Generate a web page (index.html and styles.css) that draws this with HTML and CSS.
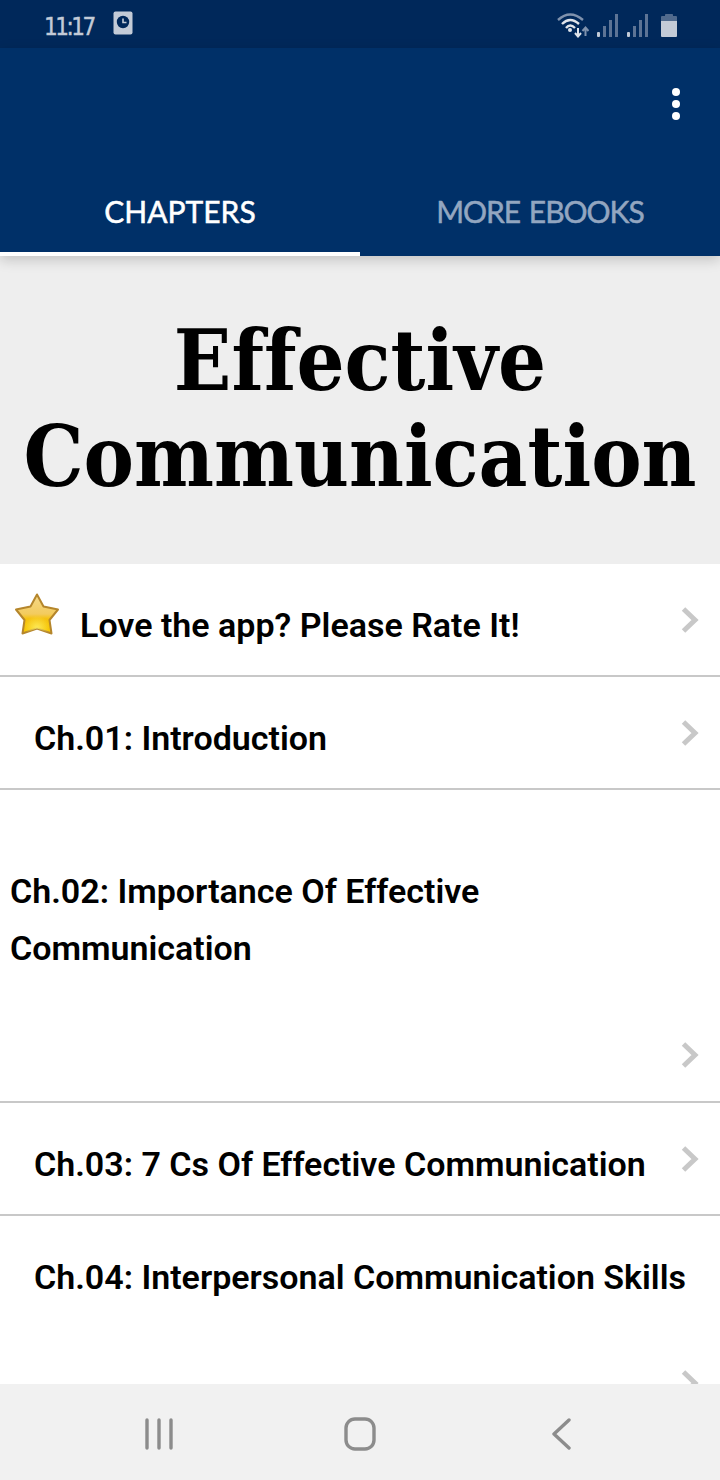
FILE: index.html
```html
<!DOCTYPE html>
<html lang="en">
<head>
  <meta charset="UTF-8">
  <title>Effective Communication</title>
  <link rel="stylesheet" href="styles.css">
</head>
<body>
  <div class="phone">

    <!-- Status bar -->
    <div class="status-bar">
      <div class="status-left">
        <span class="clock">11:17</span>
        <svg class="clock-badge" width="20" height="24" viewBox="0 0 20 24">
          <rect x="0.5" y="0.5" width="19" height="23" rx="2" fill="#c3cbd7"/>
          <circle cx="10" cy="11" r="6.2" fill="#00285a"/>
          <path d="M10 7.5V11.5H13.5" fill="none" stroke="#c3cbd7" stroke-width="1.6"/>
        </svg>
      </div>
      <div class="status-right">
        <svg width="32" height="26" viewBox="0 0 32 26">
          <path d="M1 8Q13 -3 26 8" fill="none" stroke="#7f92ad" stroke-width="2.4"/>
          <path d="M5 12Q13 4 22 12" fill="none" stroke="#dfe4ea" stroke-width="2.4"/>
          <path d="M9 16Q13 11 18 16" fill="none" stroke="#dfe4ea" stroke-width="2.4"/>
          <circle cx="13" cy="18" r="2" fill="#dfe4ea"/>
          <path d="M21 16V24M18 21L21 24.5L24 21" fill="none" stroke="#dfe4ea" stroke-width="2"/>
          <path d="M28.500 24V16M25.500 19L28.500 15.500L31.500 19" fill="none" stroke="#7f92ad" stroke-width="2"/>
        </svg>
        <svg class="signal" width="22" height="24" viewBox="0 0 22 24">
          <rect x="0" y="19" width="3" height="5" rx="1" fill="#c3cbd7"/>
          <rect x="6" y="13" width="3" height="11" fill="#5d7495"/>
          <rect x="12" y="7" width="3" height="17" fill="#5d7495"/>
          <rect x="18" y="1" width="3" height="23" fill="#5d7495"/>
        </svg>
        <svg class="signal" width="22" height="24" viewBox="0 0 22 24">
          <rect x="0" y="19" width="3" height="5" rx="1" fill="#c3cbd7"/>
          <rect x="6" y="13" width="3" height="11" fill="#5d7495"/>
          <rect x="12" y="7" width="3" height="17" fill="#5d7495"/>
          <rect x="18" y="1" width="3" height="23" fill="#5d7495"/>
        </svg>
        <svg class="battery" width="16" height="24" viewBox="0 0 16 24">
          <path d="M4 3V1.500Q4 1 5 1H11Q12 1 12 1.500V3H15Q16 3 16 4V8H0V4Q0 3 1 3Z" fill="#506a8d"/>
          <path d="M0 8H16V23Q16 24 15 24H1Q0 24 0 23Z" fill="#c3cbd7"/>
        </svg>
      </div>
    </div>

    <!-- App bar with tabs -->
    <div class="app-bar">
      <div class="toolbar">
        <div class="overflow-menu"><i></i><i></i><i></i></div>
      </div>
      <div class="tabs">
        <div class="tab active">CHAPTERS</div>
        <div class="tab more">MORE EBOOKS</div>
      </div>
    </div>

    <!-- Book title -->
    <div class="book-title">
      <h1>Effective Communication</h1>
    </div>

    <!-- Chapter list -->
    <div class="chapters">
      <div class="row rate">
        <svg class="star" width="46" height="46" viewBox="0 0 46 46">
          <defs>
            <linearGradient id="starFill" x1="0" y1="0" x2="0" y2="1">
              <stop offset="0" stop-color="#f6d98a"/>
              <stop offset="0.5" stop-color="#f3cb5e"/>
              <stop offset="0.62" stop-color="#f5c210"/>
              <stop offset="1" stop-color="#f8c800"/>
            </linearGradient>
            <radialGradient id="starGlow" cx="0.5" cy="0.85" r="0.3">
              <stop offset="0" stop-color="#fff26a" stop-opacity="0.8"/>
              <stop offset="1" stop-color="#fff26a" stop-opacity="0"/>
            </radialGradient>
          </defs>
          <path d="M23 3.500L29.500 15.500L44 18.500L35.500 29L37.500 42.500L23 37.500L8.500 42.500L10.500 29L2 18.500L16.500 15.500Z" fill="url(#starFill)" stroke="#b5862c" stroke-width="2" stroke-linejoin="round"/>
          <path d="M23 3.500L29.500 15.500L44 18.500L35.500 29L37.500 42.500L23 37.500L8.500 42.500L10.500 29L2 18.500L16.500 15.500Z" fill="url(#starGlow)"/>
        </svg>
        <span class="row-text">Love the app? Please Rate It!</span>
        <svg class="chevron" width="18" height="26" viewBox="0 0 18 26"><path d="M2.500 2L14 13L2.500 24" fill="none" stroke="#c8c8c8" stroke-width="5"/></svg>
      </div>
      <div class="row">
        <span class="row-text">Ch.01: Introduction</span>
        <svg class="chevron" width="18" height="26" viewBox="0 0 18 26"><path d="M2.500 2L14 13L2.500 24" fill="none" stroke="#c8c8c8" stroke-width="5"/></svg>
      </div>
      <div class="row tall">
        <span class="row-text">Ch.02: Importance Of Effective Communication</span>
        <svg class="chevron" width="18" height="26" viewBox="0 0 18 26"><path d="M2.500 2L14 13L2.500 24" fill="none" stroke="#c8c8c8" stroke-width="5"/></svg>
      </div>
      <div class="row">
        <span class="row-text">Ch.03: 7 Cs Of Effective Communication</span>
        <svg class="chevron" width="18" height="26" viewBox="0 0 18 26"><path d="M2.500 2L14 13L2.500 24" fill="none" stroke="#c8c8c8" stroke-width="5"/></svg>
      </div>
      <div class="row last">
        <span class="row-text">Ch.04: Interpersonal Communication Skills</span>
        <svg class="chevron" width="18" height="26" viewBox="0 0 18 26"><path d="M2.500 2L14 13L2.500 24" fill="none" stroke="#c8c8c8" stroke-width="5"/></svg>
      </div>
    </div>

    <!-- Navigation bar -->
    <div class="nav-bar">
      <svg width="28" height="32" viewBox="0 0 28 32">
        <path d="M2 2V30M14 2V30M26 2V30" stroke="#8c8c8c" stroke-width="3.400" stroke-linecap="round"/>
      </svg>
      <svg class="nav-home" width="32" height="34" viewBox="0 0 32 34">
        <rect x="2" y="2" width="28" height="30" rx="9" fill="none" stroke="#8c8c8c" stroke-width="3.400"/>
      </svg>
      <svg width="20" height="32" viewBox="0 0 20 32">
        <path d="M18 2L3 16L18 30" fill="none" stroke="#8c8c8c" stroke-width="3.400" stroke-linecap="round" stroke-linejoin="round"/>
      </svg>
    </div>

  </div>
</body>
</html>
```

FILE: styles.css
```css
/* Base */
html, body {
  margin: 0;
  padding: 0;
}

.phone {
  width: 720px;
  height: 1480px;
  display: flex;
  flex-direction: column;
  overflow: hidden;
  background-color: #fff;
  font-family: 'Roboto', sans-serif;
}

/* Status bar */
.status-bar {
  height: 48px;
  flex: none;
  display: flex;
  align-items: center;
  justify-content: space-between;
  padding: 0 43px 0 44px;
  background-color: #00285a;
}

.status-left, .status-right {
  display: flex;
  align-items: center;
}

.clock {
  width: 69px;
  margin-top: 6px;
  color: #c3cbd7;
  font-family: 'DejaVu Sans Condensed', 'DejaVu Sans', sans-serif;
  font-size: 24px;
  letter-spacing: -2.5px;
  -webkit-text-stroke: 0.4px currentColor;
}

.clock-badge {
  margin-top: -2px;
}

.status-right {
  gap: 8px;
  margin-top: 2px;
}

.battery {
  margin-left: 4px;
}

/* App bar */
.app-bar {
  flex: none;
  position: relative;
  z-index: 1;
  background-color: #003068;
  box-shadow: 0 4px 12px rgba(0, 0, 0, 0.18);
}

.toolbar {
  height: 120px;
  display: flex;
  justify-content: flex-end;
  padding-right: 40px;
}

.overflow-menu {
  display: flex;
  flex-direction: column;
  gap: 4px;
  padding-top: 40px;
}

.overflow-menu i {
  width: 8px;
  height: 8px;
  border-radius: 50%;
  background-color: #fff;
}

.tabs {
  display: flex;
  height: 88px;
}

.tab {
  flex: 1;
  box-sizing: border-box;
  text-align: center;
  padding-top: 24px;
  font-family: 'Lato', sans-serif;
  font-size: 30px;
  line-height: 38px;
  color: #93a6c0;
  -webkit-text-stroke: 0.5px currentColor;
}

.tab.active {
  color: #fff;
  border-bottom: 4px solid #fff;
}

.tab.more {
  letter-spacing: -1px;
  word-spacing: 2px;
}

/* Title block */
.book-title {
  flex: none;
  height: 308px;
  display: flex;
  align-items: center;
  justify-content: center;
  background-color: #eee;
}

.book-title h1 {
  margin: 0 0 3px;
  text-align: center;
  font-family: 'DejaVu Serif Condensed', 'DejaVu Serif', serif;
  font-size: 84px;
  line-height: 96px;
  font-weight: bold;
  font-variant-ligatures: none;
  color: #000;
}

/* Chapter rows */
.chapters {
  flex: 1;
  min-height: 0;
  overflow: hidden;
}

.row {
  box-sizing: border-box;
  height: 113px;
  display: flex;
  align-items: center;
  padding: 0 21px 0 34px;
  border-bottom: 2px solid #c8c8c8;
}

.row-text {
  flex: 1;
  padding-top: 12px;
  font-size: 34px;
  font-weight: 600;
  line-height: 57px;
  color: #000;
}

.row .chevron {
  flex: none;
}

.rate {
  height: 113px;
  padding-left: 14px;
}

.star {
  flex: none;
  margin: 0 20px 11px 0;
}

.tall {
  height: 313px;
  align-items: flex-end;
  padding-left: 10px;
  padding-bottom: 33px;
}

.tall .row-text {
  align-self: flex-start;
  padding-top: 73px;
}

.last {
  height: 240px;
  align-items: flex-start;
  border-bottom: none;
}

/* the long title runs on past the chevron column */
.last .row-text {
  min-width: 0;
  padding-top: 33px;
  white-space: nowrap;
}

.last .chevron {
  margin-top: 154px;
}

/* Navigation bar */
.nav-bar {
  flex: none;
  box-sizing: border-box;
  height: 96px;
  display: flex;
  align-items: center;
  justify-content: space-between;
  padding: 4px 149px 0 145px;
  background-color: #f1f1f1;
}

.nav-home {
  margin-right: 4px;
}
```
